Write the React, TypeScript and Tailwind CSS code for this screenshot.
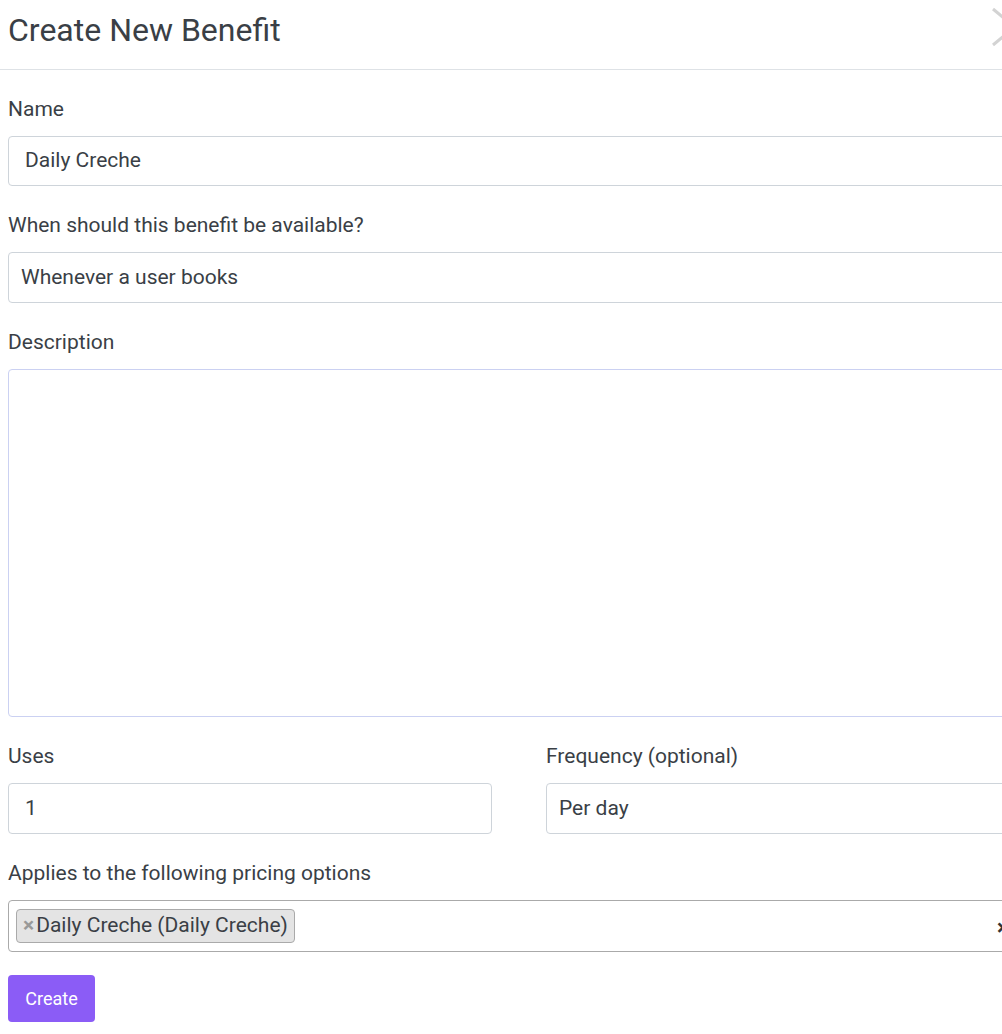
const labelCls = "block text-[21px] leading-[30px] mb-[12px] text-[#3a3f46]";
const inputCls =
  "flex items-center h-[50px] w-full rounded-[4px] border border-[#ced4da] bg-white text-[21px] text-[#3a3f46]";

const CloseIcon = () => (
  <svg width="46" height="40" viewBox="0 0 46 40" className="shrink-0">
    <path d="M1 2 L44 38 M1 38 L44 2" stroke="#d3d3d3" strokeWidth="3" fill="none" />
  </svg>
);

const Field = ({ label, children }: { label: string; children: React.ReactNode }) => (
  <div className="mb-[24px]">
    <label className={labelCls}>{label}</label>
    {children}
  </div>
);

export default function App() {
  return (
    <div
      className="w-[1002px] h-[1034px] overflow-hidden bg-white"
      style={{ fontFamily: "Roboto, 'Liberation Sans', sans-serif" }}
    >
      <div className="w-[1040px]">
        <header className="flex items-center justify-between h-[70px] border-b border-[#dee2e6] pl-[8px] pr-[4px]">
          <h1 className="text-[32px] text-[#3a3f46] font-normal -mt-[10px]">Create New Benefit</h1>
          <div className="-mt-[16px] -mr-[2px]">
            <CloseIcon />
          </div>
        </header>

        <form className="pl-[8px] pr-[10px] pt-[24px]">
          <Field label="Name">
            <div className={`${inputCls} pl-[16px]`}>Daily Creche</div>
          </Field>

          <Field label="When should this benefit be available?">
            <div className={`${inputCls} h-[51px] pl-[12px]`}>Whenever a user books</div>
          </Field>

          <Field label="Description">
            <div className="h-[348px] w-full rounded-[4px] border border-[#cbd1f2] bg-white" />
          </Field>

          <div className="grid grid-cols-[484px_484px] gap-x-[54px]">
            <Field label="Uses">
              <div className={`${inputCls} h-[51px] pl-[16px]`}>1</div>
            </Field>
            <Field label="Frequency (optional)">
              <div className={`${inputCls} h-[51px] pl-[12px]`}>Per day</div>
            </Field>
          </div>

          <div className="mb-[23px]">
            <label className={labelCls}>Applies to the following pricing options</label>
            <div className="relative flex items-center h-[52px] w-full rounded-[4px] border border-[#aaaaaa] bg-white pl-[7px]">
              <span className="flex items-center h-[34px] rounded-[4px] border border-[#aaaaaa] bg-[#e4e4e4] pl-[6px] pr-[6px] text-[21px] text-[#3a3f46]">
                <span className="text-[#999999] font-bold text-[21px] mr-[2px]">×</span>
                Daily Creche (Daily Creche)
              </span>
              <span className="absolute left-[988px] top-[10px] text-[22px] font-bold text-[#333]">×</span>
            </div>
          </div>

          <button
            type="button"
            className="h-[47px] w-[87px] rounded-[4px] bg-[#8b5cf6] text-white text-[18px]"
          >
            Create
          </button>
        </form>
      </div>
    </div>
  );
}
